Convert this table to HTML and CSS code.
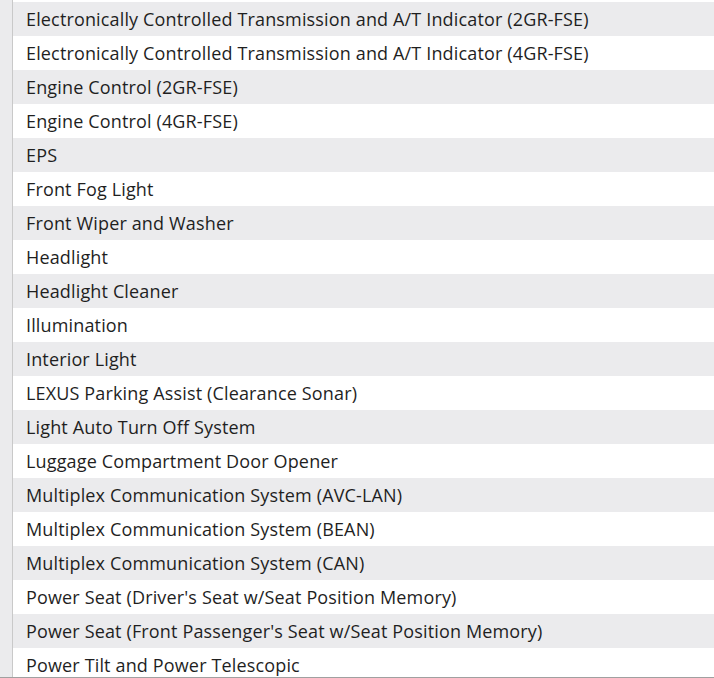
FILE: index.html
```html
<!DOCTYPE html>
<html>
<head>
<meta charset="utf-8">
<link rel="stylesheet" href="styles.css">
</head>
<body>
<div class="frame">
  <div class="gutter"></div>
  <ul class="list">
    <li class="row">Electronically Controlled Transmission and A/T Indicator (2GR-FSE)</li>
    <li class="row">Electronically Controlled Transmission and A/T Indicator (4GR-FSE)</li>
    <li class="row">Engine Control (2GR-FSE)</li>
    <li class="row">Engine Control (4GR-FSE)</li>
    <li class="row">EPS</li>
    <li class="row">Front Fog Light</li>
    <li class="row">Front Wiper and Washer</li>
    <li class="row">Headlight</li>
    <li class="row">Headlight Cleaner</li>
    <li class="row">Illumination</li>
    <li class="row">Interior Light</li>
    <li class="row">LEXUS Parking Assist (Clearance Sonar)</li>
    <li class="row">Light Auto Turn Off System</li>
    <li class="row">Luggage Compartment Door Opener</li>
    <li class="row">Multiplex Communication System (AVC-LAN)</li>
    <li class="row">Multiplex Communication System (BEAN)</li>
    <li class="row">Multiplex Communication System (CAN)</li>
    <li class="row">Power Seat (Driver's Seat w/Seat Position Memory)</li>
    <li class="row">Power Seat (Front Passenger's Seat w/Seat Position Memory)</li>
    <li class="row">Power Tilt and Power Telescopic</li>
  </ul>
</div>
</body>
</html>
```
FILE: styles.css
```css
html, body {
  margin: 0;
  padding: 0;
  background: #ffffff;
}
.frame {
  display: flex;
  height: 677px;
  overflow: hidden;
  border-bottom: 1px solid #a0a0a0;
}
.gutter {
  width: 12px;
  flex: none;
  background: #ebebed;
  border-right: 1px solid #c9c9c9;
}
.list {
  flex: 1;
  list-style: none;
  margin: 0;
  padding: 2px 0 0 0;
  font-family: "Open Sans", sans-serif;
  font-size: 18px;
  letter-spacing: 0.15px;
  color: #1f1f1f;
}
.row {
  height: 34px;
  line-height: 34px;
  padding-left: 13px;
  white-space: nowrap;
}
.row:nth-child(odd) {
  background: #ebebed;
}
```
